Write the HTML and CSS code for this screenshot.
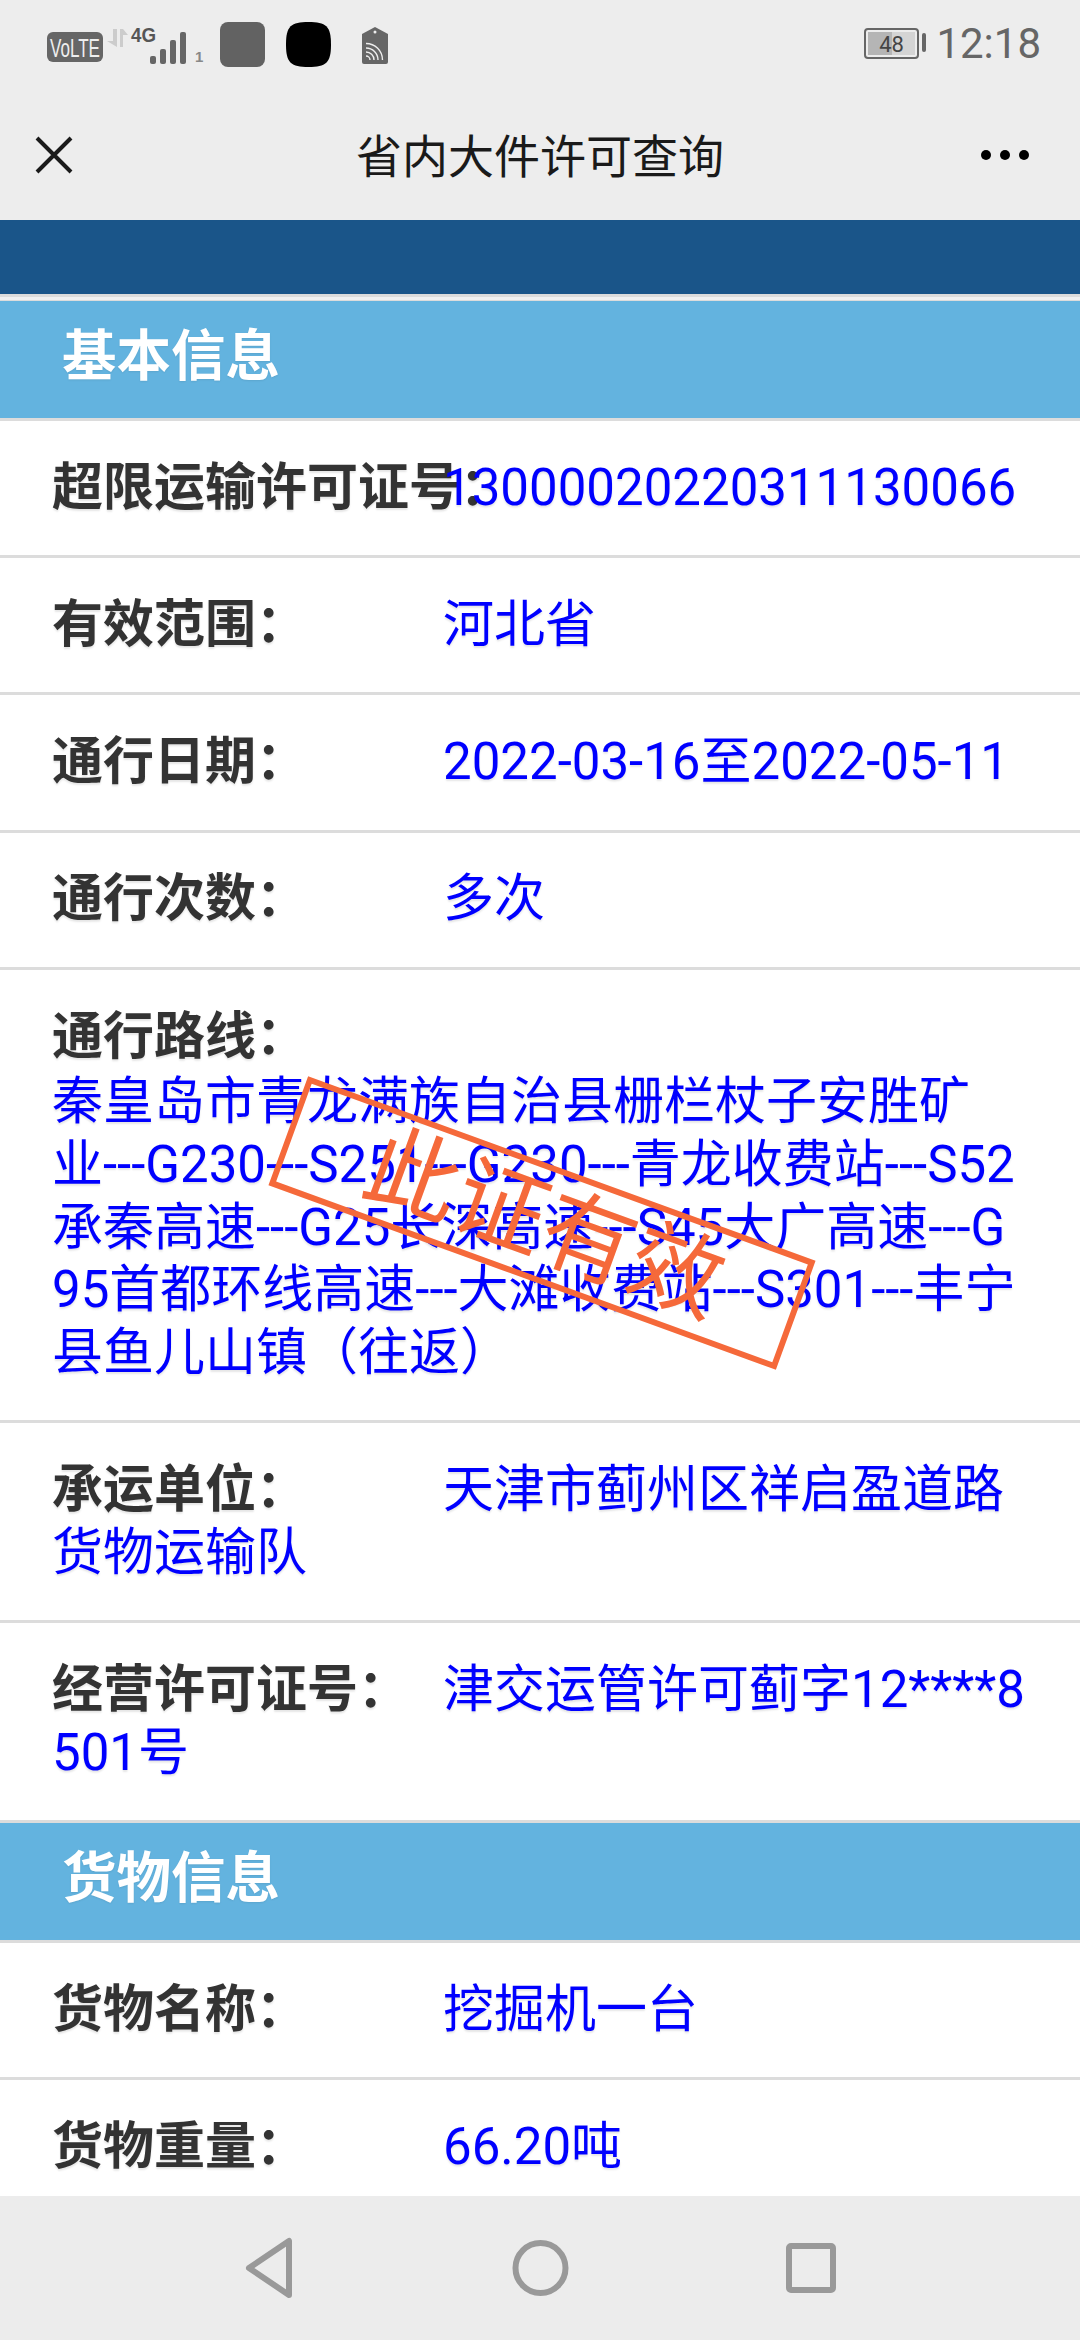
FILE: index.html
```html
<!DOCTYPE html>
<html lang="zh-CN">
<head>
<meta charset="utf-8">
<title>省内大件许可查询</title>
<link rel="stylesheet" href="styles.css">
</head>
<body>
<div class="screen">
  <header class="statusbar">
    <svg class="status-left" width="400" height="90" viewBox="0 0 400 90">
      <rect x="47" y="32" width="56" height="30" rx="6" fill="#666"/>
      <text x="50" y="57" class="volte" textLength="50" lengthAdjust="spacingAndGlyphs">VoLTE</text>
      <polygon points="113,29 117,29 117,47 107,41 113,41" fill="#ccc"/>
      <polygon points="120,29 123,29 128,35 123,35 123,47 120,47" fill="#ccc"/>
      <text x="131" y="42" class="four-g" textLength="25" lengthAdjust="spacingAndGlyphs">4G</text>
      <rect x="150" y="56" width="6" height="8" rx="2" fill="#666"/>
      <rect x="160" y="49" width="6" height="15" rx="2" fill="#666"/>
      <rect x="170" y="40" width="6" height="24" rx="2" fill="#666"/>
      <rect x="180" y="32" width="6" height="32" rx="2" fill="#666"/>
      <text x="195" y="62" class="sim">1</text>
      <rect x="220" y="22" width="45" height="45" rx="8" fill="#626262"/>
      <path d="M286 44.500C286 26 291 22 308.500 22C326 22 331 26 331 44.500C331 63 326 67 308.500 67C291 67 286 63 286 44.500Z" fill="#000"/>
      <path d="M375 27L388 34V62a2 2 0 0 1-2 2H364a2 2 0 0 1-2-2V34Z" fill="#666"/>
      <circle cx="375" cy="32" r="1.500" fill="#eee"/>
      <g fill="none" stroke="#eee" stroke-width="1.400">
        <path d="M366 56a4 4 0 0 1 4 4"/>
        <path d="M366 52a8 8 0 0 1 8 8"/>
        <path d="M366 48a12 12 0 0 1 12 12"/>
        <path d="M366 43.500a16.500 16.500 0 0 1 16.500 16.500"/>
      </g>
    </svg>
    <div class="status-right">
      <svg width="64" height="32" viewBox="0 0 64 32">
        <rect x="1" y="1" width="53" height="29" rx="3" fill="none" stroke="#666" stroke-width="2"/>
        <rect x="4" y="4" width="24" height="23" fill="#b5b5b5"/>
        <rect x="28" y="4" width="23" height="23" fill="#d4d4d4"/>
        <text x="27.500" y="24" class="battery-num">48</text>
        <rect x="58" y="5" width="4" height="19" rx="2" fill="#666"/>
      </svg>
      <span class="clock">12:18</span>
    </div>
  </header>

  <nav class="navbar">
    <svg class="nav-icon" width="38" height="38" viewBox="0 0 38 38">
      <path d="M2 2L36 36M36 2L2 36" stroke="#1a1a1a" stroke-width="4" fill="none"/>
    </svg>
    <h1 class="nav-title">省内大件许可查询</h1>
    <div class="dots"><i></i><i></i><i></i></div>
  </nav>

  <main class="content">
    <div class="blue-bar"></div>
    <div class="double-rule"></div>

    <h2 class="section">基本信息</h2>
    <div class="row"><span class="label">超限运输许可证号：</span><span class="value">13000020220311130066</span></div>
    <div class="row"><span class="label">有效范围：</span><span class="value">河北省</span></div>
    <div class="row"><span class="label">通行日期：</span><span class="value">2022-03-16至2022-05-11</span></div>
    <div class="row"><span class="label">通行次数：</span><span class="value">多次</span></div>
    <div class="row"><span class="label label-block">通行路线：</span><span class="value">秦皇岛市青龙满族自治县栅栏杖子安胜矿<br>业---G230---S251---G230---青龙收费站---S52<br>承秦高速---G25长深高速---S45大广高速---G<br>95首都环线高速---大滩收费站---S301---丰宁<br>县鱼儿山镇（往返）</span></div>
    <div class="row"><span class="label">承运单位：</span><span class="value">天津市蓟州区祥启盈道路<br>货物运输队</span></div>
    <div class="row"><span class="label">经营许可证号：</span><span class="value">津交运管许可蓟字12****8<br>501号</span></div>

    <h2 class="section">货物信息</h2>
    <div class="row"><span class="label">货物名称：</span><span class="value">挖掘机一台</span></div>
    <div class="row"><span class="label">货物重量：</span><span class="value">66.20吨</span></div>

    <div class="stamp">此证有效</div>
  </main>

  <footer class="softkeys">
    <div class="softkey">
      <svg width="60" height="64" viewBox="0 0 60 64"><path d="M49 5V59L9 32Z" fill="none" stroke="#999" stroke-width="6" stroke-linejoin="round"/></svg>
    </div>
    <div class="softkey">
      <svg width="60" height="60" viewBox="0 0 60 60"><circle cx="30.500" cy="30" r="25" fill="none" stroke="#999" stroke-width="6"/></svg>
    </div>
    <div class="softkey">
      <svg width="60" height="60" viewBox="0 0 60 60"><rect x="9" y="8" width="44" height="44" rx="2" fill="none" stroke="#999" stroke-width="6"/></svg>
    </div>
  </footer>
</div>
</body>
</html>
```

FILE: styles.css
```css
* { box-sizing: border-box; }
html, body { margin: 0; padding: 0; background: #fff; }
body { font-family: Roboto, "Noto Sans CJK SC", sans-serif; }

.screen {
  width: 1080px;
  height: 2340px;
  display: flex;
  flex-direction: column;
  overflow: hidden;
}

/* status bar */
.statusbar {
  flex: 0 0 90px;
  display: flex;
  justify-content: space-between;
  background: #ededed;
}
.status-left { display: block; }
.status-right {
  display: flex;
  align-items: center;
  gap: 8px;
  padding: 0 39px 0 0;
  height: 88px;
}
.clock { font-size: 42px; color: #666; line-height: 1; }
.volte { font: 25px "Liberation Sans", sans-serif; fill: #eee; }
.four-g { font: bold 21px "Liberation Sans", sans-serif; fill: #555; }
.sim { font: bold 15px "Liberation Sans", sans-serif; fill: #888; }
.battery-num { font: 22px Roboto, sans-serif; fill: #444; text-anchor: middle; }

/* title bar */
.navbar {
  flex: 0 0 130px;
  display: grid;
  grid-template-columns: 1fr auto 1fr;
  align-items: center;
  padding: 0 35px;
  background: #ededed;
}
.nav-icon { display: block; }
.nav-title {
  margin: 0 0 5px;
  text-align: center;
  font-size: 46px;
  font-weight: 400;
  color: #1a1a1a;
}
.dots { display: flex; gap: 9px; justify-content: flex-end; padding-right: 16px; }
.dots i { width: 10px; height: 10px; border-radius: 50%; background: #000; }

/* content */
.content {
  position: relative;
  flex: 1;
  min-height: 0;
  overflow: hidden;
  background: #fff;
}
.blue-bar { height: 74px; background: #1a5589; }
.double-rule {
  height: 7px;
  border-top: 3px solid #dcdcdc;
  border-bottom: 1px solid #dcdcdc;
  background: #f1f1f1;
}
.section {
  margin: 0;
  height: 120px;
  padding: 0 0 16px 62px;
  display: flex;
  align-items: center;
  background: #63b3df;
  border-bottom: 3px solid #dcdcdc;
  color: #fff;
  font-size: 54.500px;
  font-weight: 700;
  text-shadow: 0 1px 2px rgba(0, 0, 0, .08);
}
.row {
  padding: 35.800px 0 35.700px 52px;
  border-bottom: 3px solid #dcdcdc;
  font-size: 51px;
  line-height: 62.700px;
  white-space: nowrap;
  text-shadow: 0 2px 2px rgba(0, 0, 0, .1);
}
.label {
  display: inline-block;
  width: 391px;
  color: #333;
  font-weight: 700;
  white-space: nowrap;
}
.label-block { display: block; margin-bottom: 3px; }
.value { color: #0000ff; }

.stamp {
  position: absolute;
  left: 272px;
  top: 945px;
  width: 540px;
  height: 116px;
  display: flex;
  align-items: center;
  justify-content: center;
  padding-left: 6px;
  border: 6px solid #f5693a;
  transform: rotate(20deg);
  color: #f5693a;
  font-size: 93px;
  line-height: 1;
  font-weight: 400;
  white-space: nowrap;
}

/* soft keys */
.softkeys {
  flex: 0 0 144px;
  display: flex;
  justify-content: center;
  align-items: center;
  background: #ececec;
}
.softkey {
  flex: 0 0 270px;
  display: flex;
  justify-content: center;
}
.softkey svg { display: block; }
```
